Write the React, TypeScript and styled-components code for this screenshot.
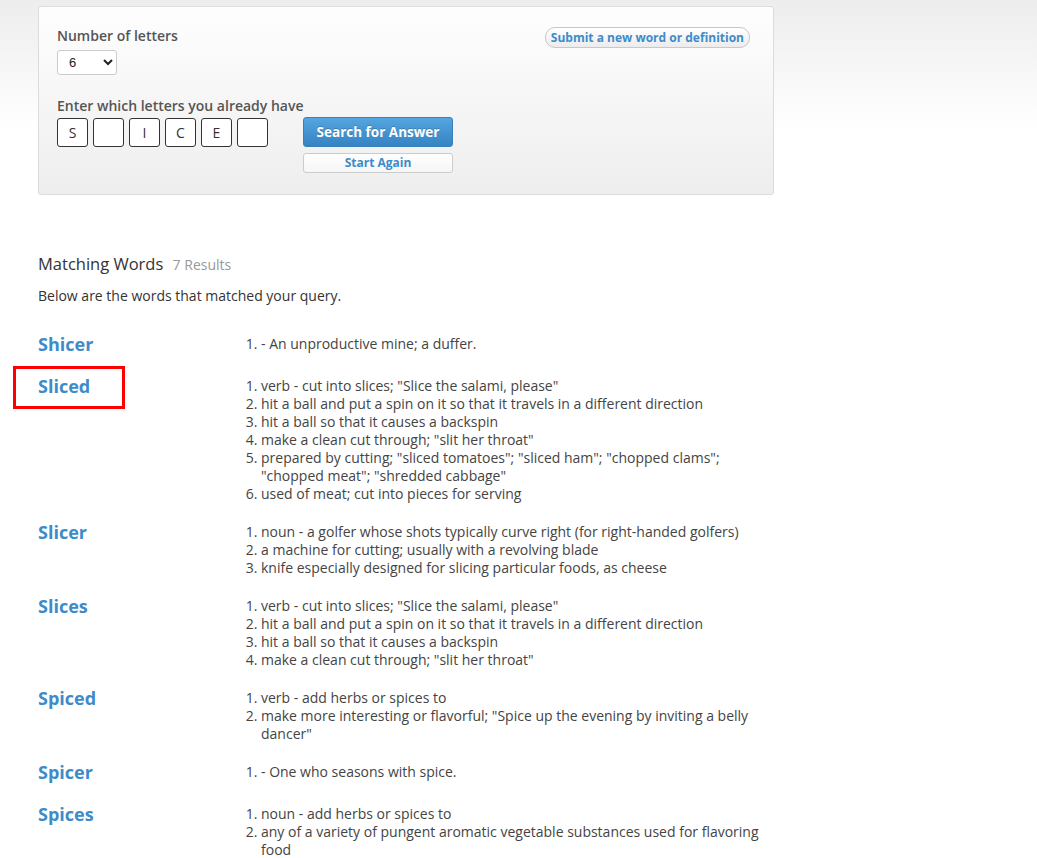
import React from 'react';
import styled, { createGlobalStyle } from 'styled-components';

const GlobalStyle = createGlobalStyle`
  html, body {
    margin: 0;
    padding: 0;
  }
  body {
    background: #fff linear-gradient(#ededed 0, #fff 130px) no-repeat;
    font-family: "Open Sans", "Liberation Sans", sans-serif;
    color: #333;
    min-height: 858px;
  }
`;

const words = [
  { word: 'Shicer', defs: ['- An unproductive mine; a duffer.'] },
  {
    word: 'Sliced',
    marked: true,
    defs: [
      'verb - cut into slices; "Slice the salami, please"',
      'hit a ball and put a spin on it so that it travels in a different direction',
      'hit a ball so that it causes a backspin',
      'make a clean cut through; "slit her throat"',
      'prepared by cutting; "sliced tomatoes"; "sliced ham"; "chopped clams"; "chopped meat"; "shredded cabbage"',
      'used of meat; cut into pieces for serving',
    ],
  },
  {
    word: 'Slicer',
    defs: [
      'noun - a golfer whose shots typically curve right (for right-handed golfers)',
      'a machine for cutting; usually with a revolving blade',
      'knife especially designed for slicing particular foods, as cheese',
    ],
  },
  {
    word: 'Slices',
    defs: [
      'verb - cut into slices; "Slice the salami, please"',
      'hit a ball and put a spin on it so that it travels in a different direction',
      'hit a ball so that it causes a backspin',
      'make a clean cut through; "slit her throat"',
    ],
  },
  {
    word: 'Spiced',
    defs: [
      'verb - add herbs or spices to',
      'make more interesting or flavorful; "Spice up the evening by inviting a belly dancer"',
    ],
  },
  { word: 'Spicer', defs: ['- One who seasons with spice.'] },
  {
    word: 'Spices',
    defs: [
      'noun - add herbs or spices to',
      'any of a variety of pungent aromatic vegetable substances used for flavoring food',
    ],
  },
];

const letters = ['S', '', 'I', 'C', 'E', ''];

const App = () => {
  return (
    <>
      <GlobalStyle />
      <Page>
        <SearchPanel>
          <Fields>
            <Label>Number of letters</Label>
            <LengthSelect defaultValue="6">
              {[3, 4, 5, 6, 7, 8, 9, 10].map(n => (
                <option key={n} value={n}>{n}</option>
              ))}
            </LengthSelect>
            <Label $gap>Enter which letters you already have</Label>
            <LetterRow>
              <Letters>
                {letters.map((l, i) => (
                  <LetterBox key={i} value={l} maxLength={1} readOnly />
                ))}
              </Letters>
              <Actions>
                <SearchButton>Search for Answer</SearchButton>
                <ResetButton>Start Again</ResetButton>
              </Actions>
            </LetterRow>
          </Fields>
          <SubmitPill href="#">Submit a new word or definition</SubmitPill>
        </SearchPanel>

        <Results>
          <Heading>
            Matching Words <Count>7 Results</Count>
          </Heading>
          <Intro>Below are the words that matched your query.</Intro>

          {words.map(w => (
            <WordRow key={w.word}>
              <Word>
                <WordLink href="#">{w.word}</WordLink>
                {w.marked && <Marker />}
              </Word>
              <Defs>
                {w.defs.map((d, i) => (
                  <li key={i}>{d}</li>
                ))}
              </Defs>
            </WordRow>
          ))}
        </Results>
      </Page>
    </>
  );
};

export default App;

const Page = styled.div`
  width: 736px;
  margin-left: 38px;
  padding-top: 6px;
`;

const SearchPanel = styled.div`
  display: flex;
  justify-content: space-between;
  align-items: flex-start;
  padding: 19px 23px 21px 18px;
  border: 1px solid #dcdcdc;
  border-radius: 3px;
  background: linear-gradient(#fefefe, #eeeeee);
`;

const Fields = styled.div`
  display: flex;
  flex-direction: column;
  align-items: flex-start;
`;

const Label = styled.label<{ $gap?: boolean }>`
  font-size: 14px;
  line-height: 20px;
  font-weight: 600;
  color: #555;
  margin-top: ${props => (props.$gap ? '21px' : '0')};
  margin-bottom: ${props => (props.$gap ? '1px' : '4px')};
`;

const LengthSelect = styled.select`
  width: 60px;
  height: 25px;
  padding: 0 6px 0 7px;
  font-family: "Liberation Sans", Arial, sans-serif;
  font-size: 13px;
  color: #222;
  background: #fff;
  border: 1px solid #ccc;
  border-radius: 3px;
`;

const LetterRow = styled.div`
  display: flex;
  align-items: flex-start;
  gap: 35px;
`;

const Letters = styled.div`
  display: flex;
  gap: 5px;
  padding-top: 1px;
`;

const LetterBox = styled.input`
  box-sizing: border-box;
  width: 31px;
  height: 29px;
  padding: 0;
  text-align: center;
  font-family: "Open Sans", "Liberation Sans", sans-serif;
  font-size: 14px;
  color: #333;
  background: #fff;
  border: 1px solid #333;
  border-radius: 3px;
  outline: none;
`;

const Actions = styled.div`
  display: flex;
  flex-direction: column;
  gap: 6px;
  width: 150px;
`;

const SearchButton = styled.button`
  height: 30px;
  padding: 0 0 1px;
  font-family: "Open Sans", "Liberation Sans", sans-serif;
  font-size: 13.5px;
  font-weight: 700;
  color: #fff;
  text-shadow: 0 -1px 0 rgba(0, 0, 0, 0.2);
  background: linear-gradient(#55a5e0, #3583c3);
  border: 1px solid #3a80ba;
  border-radius: 3px;
  cursor: pointer;
`;

const ResetButton = styled.button`
  height: 20px;
  padding: 0;
  font-family: "Open Sans", "Liberation Sans", sans-serif;
  font-size: 12px;
  font-weight: 700;
  line-height: 18px;
  color: #3d8bc9;
  background: linear-gradient(#fff, #f6f6f6);
  border: 1px solid #ccc;
  border-radius: 3px;
  cursor: pointer;
`;

const SubmitPill = styled.a`
  margin-top: 1px;
  padding: 0 5px;
  height: 19px;
  line-height: 19px;
  font-size: 12px;
  font-weight: 700;
  color: #3d8bc9;
  text-decoration: none;
  background: linear-gradient(#fff, #ececec);
  border: 1px solid #c8c8c8;
  border-radius: 10px;
`;

const Results = styled.div`
  padding-top: 57px;
`;

const Heading = styled.h2`
  margin: 0;
  font-size: 16.5px;
  line-height: 24px;
  font-weight: 400;
  color: #333;
`;

const Count = styled.span`
  margin-left: 5px;
  font-size: 14px;
  color: #999;
`;

const Intro = styled.p`
  margin: 9px 0 29px;
  font-size: 14px;
  line-height: 20px;
  color: #333;
`;

const WordRow = styled.div`
  display: flex;
  align-items: flex-start;
  margin-bottom: 20px;
  min-height: 22px;
`;

const Word = styled.div`
  position: relative;
  width: 207px;
  flex-shrink: 0;
  margin-top: -2px;
`;

const WordLink = styled.a`
  font-size: 18px;
  line-height: 22px;
  font-weight: 700;
  color: #3d8bc9;
  text-decoration: none;
`;

const Marker = styled.div`
  position: absolute;
  left: -25px;
  top: -9px;
  width: 106px;
  height: 37px;
  border: 3px solid #f00;
`;

const Defs = styled.ol`
  flex: 1;
  margin: 0;
  padding-left: 16px;
  font-size: 14px;
  line-height: 18px;
  color: #444;
`;
